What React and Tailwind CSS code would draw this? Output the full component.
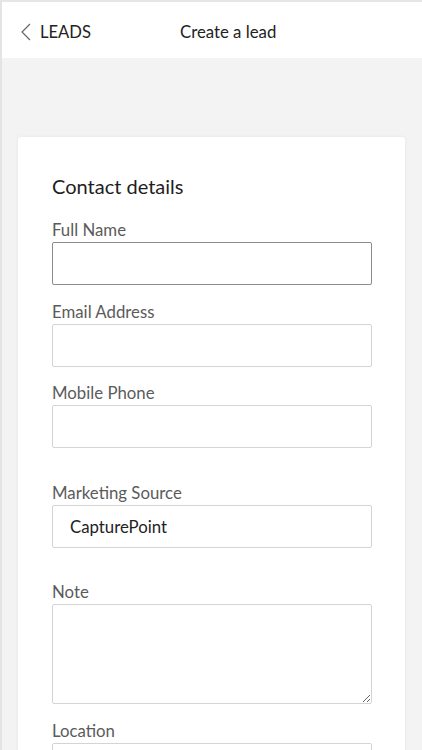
function Field({ label, value, focused, className = "" }) {
  return (
    <div className={className}>
      <label className="block text-[16.8px] leading-5 text-[#5b5b5b] mb-[2px]">{label}</label>
      <input
        type="text"
        defaultValue={value}
        readOnly
        className={`w-[320px] h-[43px] px-[17px] rounded-[2px] bg-white text-[16.8px] text-[#222] outline-none border ${
          focused ? "border-[#8c8c8c]" : "border-[#d4d4d4]"
        }`}
      />
    </div>
  );
}

export default function App() {
  return (
    <div
      className="w-[422px] h-[750px] overflow-hidden bg-[#f3f3f3] border-l-2 border-[#e4e4e4]"
      style={{ fontFamily: "Lato, 'Open Sans', sans-serif" }}
    >
      {/* header */}
      <div className="h-[58px] bg-white border-t-2 border-[#e6e6e6] flex items-center pt-[4px]">
        <svg width="12" height="18" viewBox="0 0 12 18" className="ml-[18px]" fill="none">
          <polyline points="10,1 2,9 10,17" stroke="#666" strokeWidth="1.2" />
        </svg>
        <span className="ml-[8px] text-[16.6px] leading-6 text-[#222]">LEADS</span>
        <span className="ml-[89px] text-[16.8px] leading-6 text-[#222]">Create a lead</span>
      </div>

      {/* card */}
      <div className="mt-[79px] ml-[16px] w-[387px] bg-white rounded-[3px] shadow-[0_0_4px_rgba(0,0,0,0.06)] px-[34px] pt-[37px] pb-10">
        <h2 className="text-[20px] leading-6 text-[#1e1e1e] mb-[22px]">Contact details</h2>
        <Field label="Full Name" focused />
        <Field label="Email Address" className="mt-[17px]" />
        <Field label="Mobile Phone" className="mt-[16px]" />
        <Field label="Marketing Source" value="CapturePoint" className="mt-[35px]" />
        <div className="mt-[34px]">
          <label className="block text-[16.8px] leading-5 text-[#5b5b5b] mb-[2px]">Note</label>
          <textarea
            readOnly
            className="block w-[320px] h-[100px] rounded-[2px] border border-[#d4d4d4] bg-white outline-none"
          />
        </div>
        <Field label="Location" className="mt-[17px]" />
      </div>
    </div>
  );
}
